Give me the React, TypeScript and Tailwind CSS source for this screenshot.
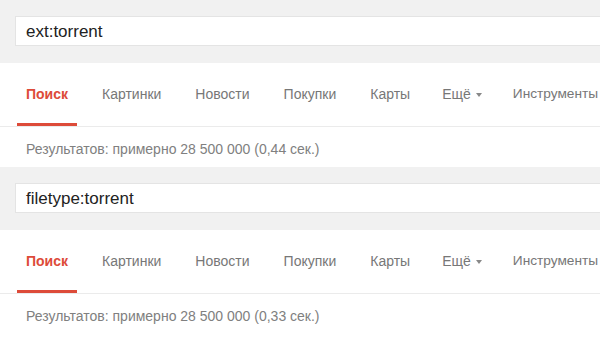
import React from "react";

const tabs = ["Поиск", "Картинки", "Новости", "Покупки", "Карты", "Ещё", "Инструменты"];

function SearchBlock({ query, stats }: { query: string; stats: string }) {
  return (
    <div className="w-full">
      {/* gray search band */}
      <div className="h-[63px] bg-[#f1f1f1] pt-[16px] pl-[15px] overflow-hidden">
        <div className="h-[30px] w-[620px] bg-white border border-[#e4e4e4] flex items-center pl-[10px]">
          <span className="text-[17px] text-[#222] leading-none">{query}</span>
        </div>
      </div>

      {/* tabs */}
      <div className="h-[64px] bg-white border-b border-[#ebebeb] flex items-stretch pl-[17px] whitespace-nowrap overflow-hidden">
        {tabs.map((t, i) => (
          <div
            key={t}
            className={
              i === 0
                ? "relative flex items-center px-[9px] mr-[16px] text-[14px] font-bold text-[#dd4b39]"
                : i === 4
                ? "relative flex items-center px-[9px] mr-[14px] text-[14px] text-[#777]"
                : i === 5
                ? "relative flex items-center px-[9px] mr-[13px] text-[14px] text-[#777]"
                : i === 6
                ? "relative flex items-center px-[9px] text-[13.7px] text-[#777]"
                : "relative flex items-center px-[9px] mr-[16px] text-[14px] text-[#777]"
            }
          >
            {t}
            {t === "Ещё" && (
              <span className="ml-[5px] mt-[1px] w-0 h-0 border-l-[3px] border-r-[3px] border-t-[4px] border-l-transparent border-r-transparent border-t-[#888]" />
            )}
            {i === 0 && <div className="absolute left-0 right-0 bottom-0 h-[3px] bg-[#dd4b39]" />}
          </div>
        ))}
      </div>

      {/* stats */}
      <div className="h-[40px] bg-white flex items-center pt-[5px] pl-[26px]">
        <span className="text-[14px] text-[#808080]">{stats}</span>
      </div>
    </div>
  );
}

export default function App() {
  return (
    <div className="w-[600px] h-[340px] bg-white overflow-hidden" style={{ fontFamily: '"Liberation Sans", Arial, sans-serif' }}>
      <SearchBlock query="ext:torrent" stats="Результатов: примерно 28 500 000 (0,44 сек.)" />
      <SearchBlock query="filetype:torrent" stats="Результатов: примерно 28 500 000 (0,33 сек.)" />
    </div>
  );
}
